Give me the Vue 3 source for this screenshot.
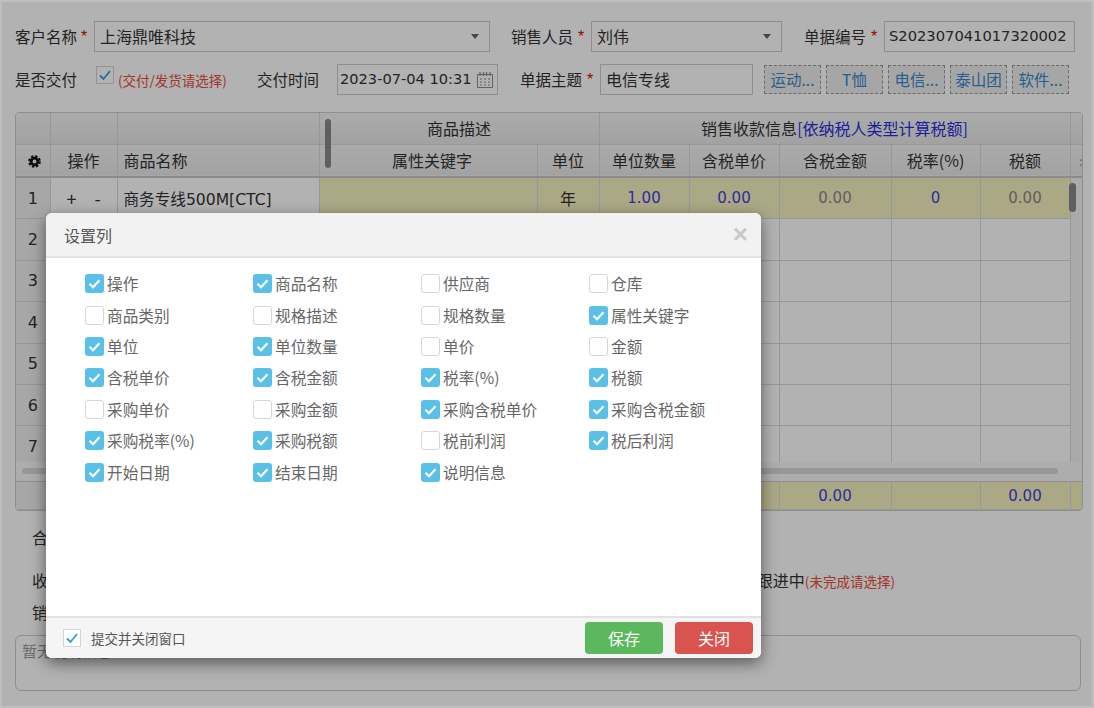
<template>
  <div class="page">
    <!-- 表单区域 -->
    <div class="form-row first">
      <label class="lbl">客户名称</label><span class="star s1">*</span>
      <div class="select customer">上海鼎唯科技<i class="caret"></i></div>
      <label class="lbl seller">销售人员</label><span class="star s2">*</span>
      <div class="select person">刘伟<i class="caret"></i></div>
      <label class="lbl code">单据编号</label><span class="star s3">*</span>
      <div class="input bill-no">S202307041017320002</div>
    </div>
    <div class="form-row second">
      <label class="lbl">是否交付</label>
      <span class="mini-check deliver">
        <svg viewBox="0 0 18 18" width="18" height="18"><path d="M4 9.5l3.5 3.5L14 5" fill="none" stroke="#2a9fd6" stroke-width="1.8" /></svg>
      </span>
      <span class="hint">(交付/发货请选择)</span>
      <label class="lbl time-lbl">交付时间</label>
      <div class="input date">
        2023-07-04 10:31
        <svg class="cal" viewBox="0 0 18 18" width="18" height="18">
          <path d="M1.5 3.5h15v13h-15z" fill="none" stroke="#8b8b8b" />
          <path d="M4 1v4M7.5 1v4M10.5 1v4M14 1v4" stroke="#8b8b8b" stroke-width="1.2" />
          <path d="M4 8h2M8 8h2M12 8h2M4 11h2M8 11h2M12 11h2M4 14h2M8 14h2M12 14h2" stroke="#8b8b8b" />
        </svg>
      </div>
      <label class="lbl subject-lbl">单据主题</label><span class="star s4">*</span>
      <div class="input subject">电信专线</div>
      <div class="tags">
        <span v-for="t in tags" :key="t" class="tag">{{ t }}</span>
      </div>
    </div>

    <!-- 明细表格 -->
    <div class="grid-wrap">
      <table class="grid head">
        <colgroup><col v-for="(w, i) in colWidths" :key="i" :style="{ width: w + 'px' }" /></colgroup>
        <tbody>
          <tr class="h1">
            <th></th><th></th><th></th>
            <th colspan="2">商品描述</th>
            <th colspan="5">销售收款信息<span class="blue">[依纳税人类型计算税额]</span></th>
            <th></th>
          </tr>
          <tr class="h2">
            <th>
              <svg class="gear" viewBox="0 0 14 14" width="13" height="13">
                <circle cx="7" cy="7" r="3.6" fill="none" stroke="#111" stroke-width="3" />
                <circle cx="7" cy="7" r="5.6" fill="none" stroke="#111" stroke-width="2.4" stroke-dasharray="2.6 1.8" />
              </svg>
            </th>
            <th>操作</th>
            <th class="left">商品名称</th>
            <th class="attr">属性关键字</th><th>单位</th><th>单位数量</th><th>含税单价</th><th>含税金额</th><th>税率(%)</th><th>税额</th>
            <th class="clip">:</th>
          </tr>
        </tbody>
      </table>
      <div class="body-scroll">
        <table class="grid">
          <colgroup><col v-for="(w, i) in colWidths" :key="i" :style="{ width: w + 'px' }" /></colgroup>
          <tbody>
            <tr class="active">
              <td class="idx">1</td>
              <td class="plain ops"><span>+</span><span>-</span></td>
              <td class="plain name">商务专线500M[CTC]</td>
              <td></td><td>年</td>
              <td class="num">1.00</td><td class="num">0.00</td><td class="muted">0.00</td><td class="num">0</td><td class="muted">0.00</td>
              <td class="track"></td>
            </tr>
            <tr v-for="n in [2, 3, 4, 5, 6, 7]" :key="n">
              <td class="idx">{{ n }}</td>
              <td class="plain"></td><td class="plain"></td>
              <td></td><td></td><td></td><td></td><td></td><td></td><td></td>
              <td class="track"></td>
            </tr>
          </tbody>
        </table>
        <i class="v-thumb"></i>
      </div>
      <div class="h-scroll"><i></i></div>
      <table class="grid foot">
        <colgroup><col v-for="(w, i) in colWidths" :key="i" :style="{ width: w + 'px' }" /></colgroup>
        <tbody>
          <tr>
            <td class="grey"></td><td class="grey"></td><td class="grey"></td>
            <td></td><td></td><td></td><td></td>
            <td class="num">0.00</td><td></td><td class="num">0.00</td><td></td>
          </tr>
        </tbody>
      </table>
      <i class="col-thumb"></i>
    </div>

    <!-- 合计及备注 -->
    <div class="summary">合计金额</div>
    <div class="status">
      <span>收款状态</span>
      <span class="status-right">跟进中<em>(未完成请选择)</em></span>
    </div>
    <div class="seller-line">销售备注</div>
    <div class="remark">暂无说明信息</div>

    <!-- 遮罩 -->
    <div class="mask"></div>

    <!-- 设置列弹窗 -->
    <div class="modal">
      <div class="modal-head">
        <span>设置列</span>
        <span class="close">×</span>
      </div>
      <div class="modal-body">
        <div v-for="c in columns" :key="c.label" class="col-item">
          <span class="box" :class="{ on: c.on }">
            <svg v-if="c.on" viewBox="0 0 19 19" width="19" height="19">
              <path d="M4.5 9.8l3.5 3.4 6.5-7" fill="none" stroke="#fff" stroke-width="2.2" />
            </svg>
          </span>
          <span>{{ c.label }}</span>
        </div>
      </div>
      <div class="modal-foot">
        <span class="mini-check">
          <svg viewBox="0 0 18 18" width="18" height="18"><path d="M4 9.5l3.5 3.5L14 5" fill="none" stroke="#2a9fd6" stroke-width="1.8" /></svg>
        </span>
        <span class="foot-label">提交并关闭窗口</span>
        <button class="btn green">保存</button>
        <button class="btn red">关闭</button>
      </div>
    </div>
  </div>
</template>

<script setup>
// 表格列宽
const colWidths = [34, 67, 202, 218, 62, 90, 90, 112, 89, 90, 13];

const tags = ['运动...', 'T恤', '电信...', '泰山团', '软件...'];

// 可选列，checked 状态
const columns = [
  ['操作', 1], ['商品名称', 1], ['供应商', 0], ['仓库', 0],
  ['商品类别', 0], ['规格描述', 0], ['规格数量', 0], ['属性关键字', 1],
  ['单位', 1], ['单位数量', 1], ['单价', 0], ['金额', 0],
  ['含税单价', 1], ['含税金额', 1], ['税率(%)', 1], ['税额', 1],
  ['采购单价', 0], ['采购金额', 0], ['采购含税单价', 1], ['采购含税金额', 1],
  ['采购税率(%)', 1], ['采购税额', 1], ['税前利润', 0], ['税后利润', 1],
  ['开始日期', 1], ['结束日期', 1], ['说明信息', 1],
].map(([label, on]) => ({ label, on: !!on }));
</script>

<style>
html,
body {
  margin: 0;
  overflow: hidden;
}
</style>

<style scoped>
.page {
  position: relative;
  width: 1094px;
  height: 708px;
  box-sizing: border-box;
  padding-top: 21px;
  overflow: hidden;
  background: #fff;
  color: #333;
  font-family: "DejaVu Sans", "Noto Sans CJK SC", sans-serif;
  font-size: 16px;
}

/* 表单 */
.form-row {
  display: flex;
  align-items: center;
  padding-left: 15px;
}
.first {
  height: 31px;
}
.second {
  height: 31px;
  margin-top: 12px;
}
.lbl {
  padding-bottom: 2px;
  font-family: "Noto Sans CJK SC", sans-serif;
  font-size: 15.5px;
  white-space: nowrap;
  width: 62px;
}
.star {
  color: #d00;
  font-size: 16px;
  width: 10px;
  text-align: center;
  font-family: "Liberation Sans", sans-serif;
}
.s1 { margin-left: 2px; margin-right: 5px; }
.s2 { margin-left: 3px; margin-right: 5px; }
.s3 { margin-left: 3px; margin-right: 5px; }
.s4 { margin-left: 3px; margin-right: 5px; }
.seller { margin-left: 21px; }
.code { margin-left: 22px; }
.select,
.input {
  position: relative;
  box-sizing: border-box;
  height: 31px;
  line-height: 28px;
  border: 1px solid #ccc;
  padding: 0 5px;
  white-space: nowrap;
}
.customer { width: 396px; font-family: "Noto Sans CJK SC", sans-serif; }
.person { width: 191px; font-family: "Noto Sans CJK SC", sans-serif; }
.bill-no { width: 191px; font-size: 14.7px; padding-left: 4px; }
.caret {
  position: absolute;
  right: 10px;
  top: 12px;
  border: 4px solid transparent;
  border-top: 5px solid #666;
  border-bottom: 0;
}
.mini-check {
  display: inline-flex;
  box-sizing: border-box;
  width: 18px;
  height: 18px;
  border: 1px solid #d5d5d5;
  background: #fff;
  align-items: center;
  justify-content: center;
}
.mini-check svg {
  flex: none;
}
.deliver {
  margin-left: 19px;
  margin-top: -9px;
}
.hint {
  margin-left: 4px;
  width: 108px;
  color: #e74c3c;
  font-size: 13.5px;
  font-family: "Noto Sans CJK SC", sans-serif;
  white-space: nowrap;
}
.time-lbl { margin-left: 31px; }
.date {
  width: 161px;
  margin-left: 18px;
  padding: 0 0 0 2px;
  font-size: 14.6px;
}
.cal {
  position: absolute;
  right: 3px;
  top: 6px;
}
.subject-lbl { margin-left: 22px; }
.subject { width: 153px; font-family: "Noto Sans CJK SC", sans-serif; }
.tags {
  display: flex;
  gap: 5px;
  margin-left: 11px;
}
.tag {
  box-sizing: border-box;
  width: 57px;
  height: 29px;
  line-height: 26px;
  text-align: center;
  border: 1px dashed #999;
  background: #eee;
  color: #3a87c8;
  font-family: "Noto Sans CJK SC", sans-serif;
  font-size: 15.5px;
  white-space: nowrap;
  overflow: hidden;
}

/* 表格 */
.grid-wrap {
  position: relative;
  box-sizing: border-box;
  width: 1068px;
  margin: 17px 0 0 15px;
  border: 1px solid #ccc;
  border-radius: 4px;
  overflow: hidden;
}
.grid {
  table-layout: fixed;
  width: 1067px;
  border-collapse: collapse;
  font-family: "Noto Sans CJK SC", sans-serif;
  font-size: 16px;
}
.grid th {
  font-weight: 400;
  padding: 0;
  border-right: 1px solid #d8d8d8;
  border-bottom: 1px solid #d8d8d8;
  background: linear-gradient(#f5f5f5, #e8e8e8);
  white-space: nowrap;
  overflow: hidden;
}
.h1 { height: 31px; }
.h2 { height: 33px; }
.h2 th { border-bottom: 2px solid #c8c8c8; }
.grid th.left { text-align: left; padding-left: 6px; }
.grid th.attr { padding-left: 8px; }
.clip { color: #888; font-size: 12px; text-align: right; }
.gear {
  display: block;
  margin: 3px 0 0 12px;
}
.blue { color: #2a2add; }
.body-scroll {
  position: relative;
  height: 284px;
  overflow: hidden;
}
.grid td {
  height: 40.4px;
  padding: 0;
  text-align: center;
  border-right: 1px solid #d8d8d8;
  border-bottom: 1px solid #d8d8d8;
}
.active td {
  background: #f5f1bf;
}
.grid td.idx {
  background: #f0f0f0;
  font-family: "DejaVu Sans", sans-serif;
}
.grid td.plain {
  background: #fff;
}
.ops span {
  margin: 0 9px;
  font-size: 18px;
}
.grid td.name {
  text-align: left;
  padding-left: 6px;
  font-size: 15.6px;
  font-family: "DejaVu Sans", "Noto Sans CJK SC", sans-serif;
  white-space: nowrap;
}
.num,
.muted {
  font-family: "DejaVu Sans", sans-serif;
  font-size: 15px;
}
.num { color: #3f3fe8; }
.muted { color: #888; }
.grid td.track {
  border: 0;
  background: #f4f4f4;
}
.v-thumb {
  position: absolute;
  right: 6px;
  top: 5px;
  width: 7px;
  height: 29px;
  border-radius: 4px;
  background: #888;
}
.h-scroll {
  box-sizing: border-box;
  height: 19px;
  padding: 6px 24px 0 6px;
  background: #f8f8f8;
}
.h-scroll i {
  display: block;
  height: 6px;
  border-radius: 3px;
  background: #d8d8d8;
}
.foot {
  border-top: 1px solid #ccc;
}
.foot td {
  height: 26px;
  padding-top: 1px;
  background: #f5f1bf;
}
.foot td.grey {
  background: #f0f0f0;
}
.col-thumb {
  position: absolute;
  left: 309px;
  top: 6px;
  width: 6px;
  height: 49px;
  border-radius: 3px;
  background: #888;
}

/* 下方区域 */
.summary,
.status,
.seller-line,
.remark {
  font-family: "Noto Sans CJK SC", sans-serif;
}
.summary {
  margin: 15px 0 0 32px;
  line-height: 22px;
}
.status {
  display: flex;
  justify-content: space-between;
  margin: 21px 0 0 32px;
  padding-right: 199px;
  line-height: 22px;
}
.status-right {
  color: #333;
}
.status-right em {
  font-style: normal;
  font-size: 13.5px;
  color: #e74c3c;
}
.seller-line {
  margin: 9px 0 0 32px;
  line-height: 22px;
}
.remark {
  box-sizing: border-box;
  width: 1066px;
  height: 56px;
  margin: 12px 0 0 15px;
  padding: 5px 6px;
  border: 1px solid #ccc;
  border-radius: 6px;
  color: #999;
  line-height: 20px;
  font-size: 15px;
}

/* 遮罩 */
.mask {
  position: absolute;
  inset: 2px;
  background: rgba(0, 0, 0, 0.3);
  box-shadow: 0 0 0 2px #bfbfbf;
}

/* 弹窗 */
.modal {
  position: absolute;
  left: 46px;
  top: 213px;
  display: flex;
  flex-direction: column;
  width: 715px;
  height: 445px;
  border-radius: 6px;
  overflow: hidden;
  background: #fff;
  box-shadow: 0 5px 15px rgba(0, 0, 0, 0.5);
  font-family: "Noto Sans CJK SC", sans-serif;
  color: #666;
}
.modal-head {
  display: flex;
  flex: none;
  justify-content: space-between;
  align-items: center;
  box-sizing: border-box;
  height: 45px;
  padding: 0 13px 0 18px;
  background: #f2f2f2;
  border-bottom: 2px solid #e2e2e2;
  font-size: 16px;
  color: #555;
}
.close {
  color: #c8c8c8;
  font-family: "Liberation Sans", sans-serif;
  font-size: 26px;
  font-weight: 700;
}
.modal-body {
  flex: 1;
  display: grid;
  grid-template-columns: repeat(4, 168px);
  grid-auto-rows: 31.4px;
  padding: 10px 0 0 39px;
}
.col-item {
  display: flex;
  align-items: center;
  gap: 3px;
  font-size: 15.7px;
  white-space: nowrap;
}
.box {
  box-sizing: border-box;
  width: 19px;
  height: 19px;
  border: 1px solid #d5d5d5;
  border-radius: 3px;
  background: #fff;
}
.box.on {
  border: 0;
  background: #5bc0e8;
}
.box svg {
  display: block;
}
.modal-foot {
  display: flex;
  flex: none;
  align-items: center;
  box-sizing: border-box;
  height: 42px;
  padding: 0 8px 0 17px;
  background: #f5f5f5;
  border-top: 2px solid #e2e2e2;
}
.foot-label {
  flex: 1;
  margin-left: 10px;
  font-size: 13.5px;
  color: #555;
}
.btn {
  width: 78px;
  height: 32px;
  margin-left: 12px;
  border: 0;
  border-radius: 4px;
  color: #fff;
  font-family: "Noto Sans CJK SC", sans-serif;
  font-size: 16px;
}
.green { background: #5cb85c; }
.red { background: #d9534f; }
</style>
